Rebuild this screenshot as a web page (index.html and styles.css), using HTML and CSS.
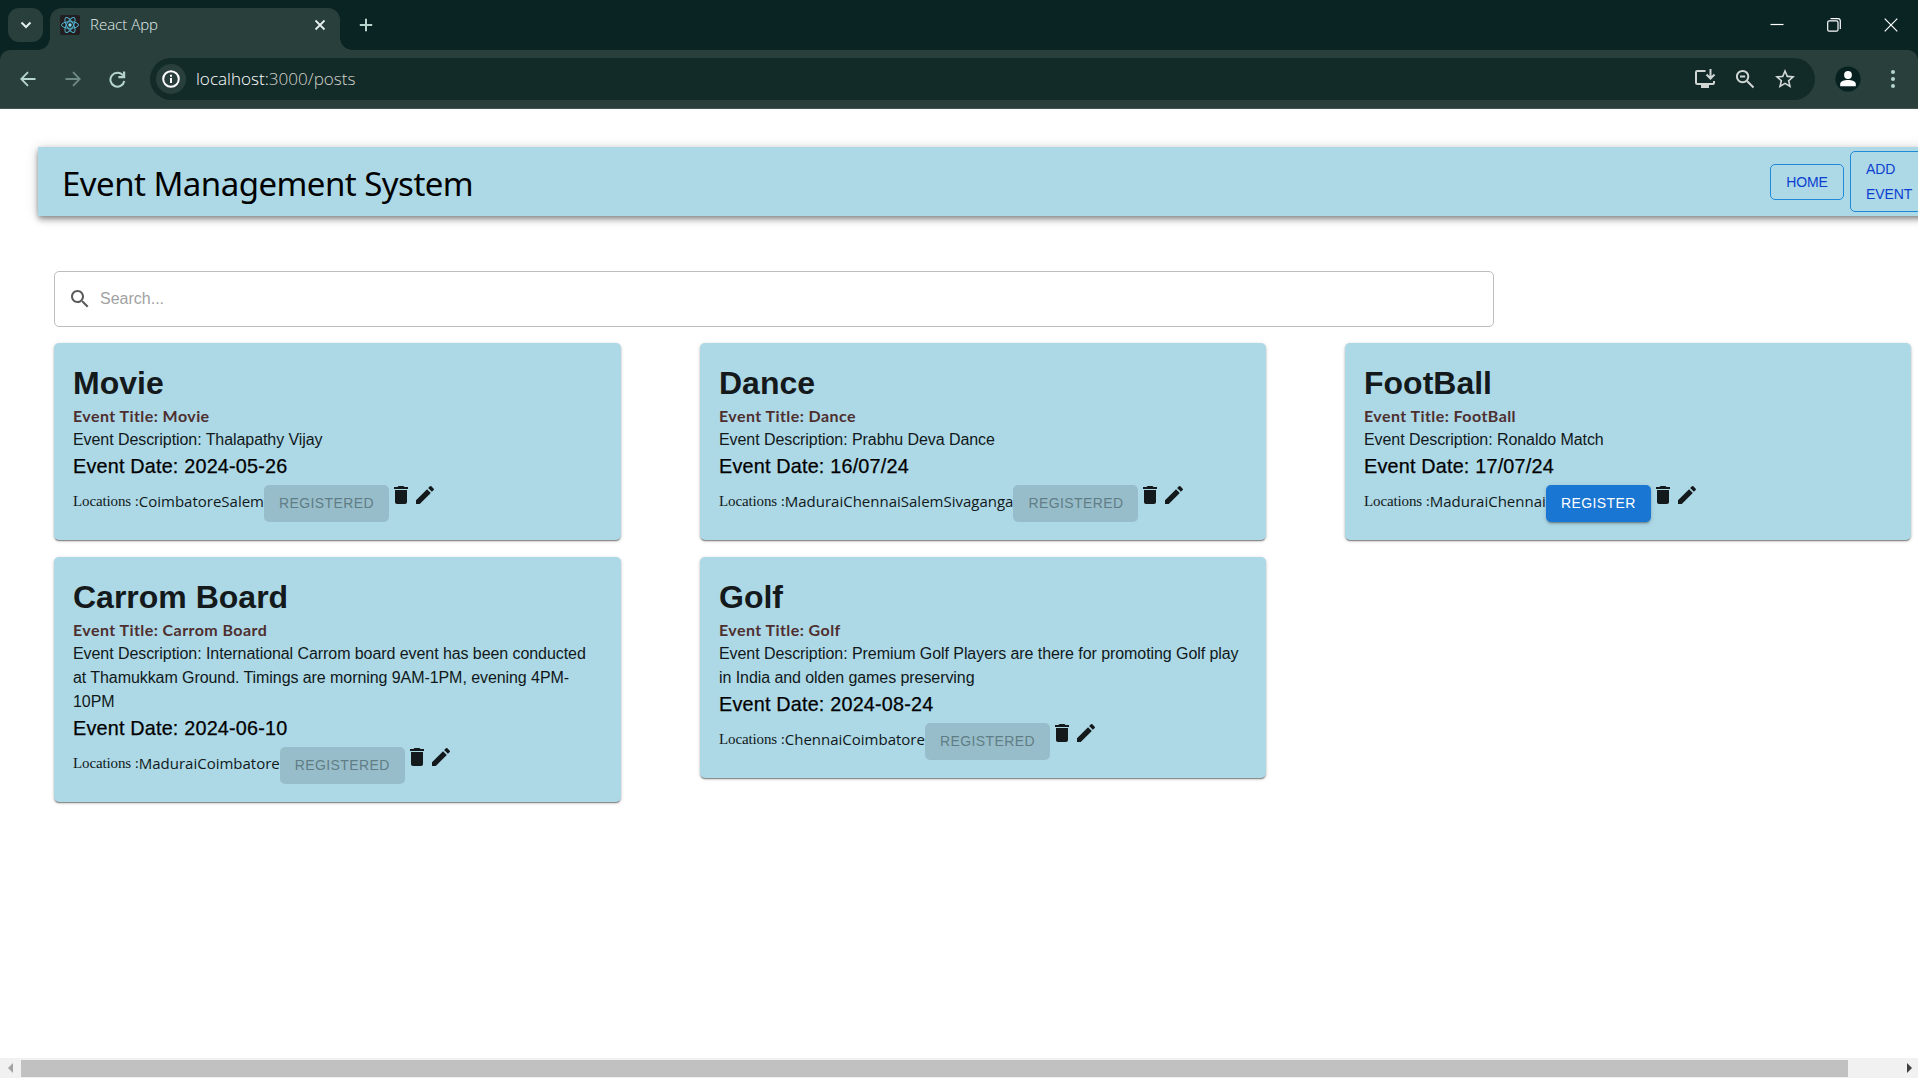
FILE: index.html
```html
<!DOCTYPE html>
<html lang="en">
<head>
<meta charset="utf-8">
<title>React App</title>
<link rel="stylesheet" href="styles.css">
</head>
<body>
<svg width="0" height="0" class="defs" aria-hidden="true">
  <symbol id="trash" viewBox="0 0 24 24"><path d="M6 19c0 1.100.9 2 2 2h8c1.100 0 2-.9 2-2V7H6zM19 4h-3.500l-1-1h-5l-1 1H5v2h14z"/></symbol>
  <symbol id="pencil" viewBox="0 0 24 24"><path d="M3 17.250V21h3.750L17.810 9.940l-3.750-3.750zM20.710 7.040c.39-.39.39-1.020 0-1.410l-2.340-2.340a.9959.9959 0 0 0-1.410 0l-1.830 1.830 3.750 3.750z"/></symbol>
</svg>

<div class="browser">
  <div class="tabstrip">
    <div class="tab-search"><svg width="12" height="8" viewBox="0 0 12 8"><path d="M1.500 1.500 6 6l4.500-4.500" class="ln bright w2"/></svg></div>
    <div class="tab">
      <svg class="favicon" width="20" height="20" viewBox="0 0 20 20"><rect width="20" height="20" rx="2" fill="#231f20"/><g fill="none" stroke="#4fb3cf" stroke-width="1"><ellipse cx="10" cy="10" rx="8.500" ry="3.300"/><ellipse cx="10" cy="10" rx="8.500" ry="3.300" transform="rotate(60 10 10)"/><ellipse cx="10" cy="10" rx="8.500" ry="3.300" transform="rotate(120 10 10)"/></g><circle cx="10" cy="10" r="1.700" fill="#7fdcf0"/></svg>
      <span class="tab-title">React App</span>
      <svg class="tab-close" width="12" height="12" viewBox="0 0 12 12"><path d="M1.500 1.500l9 9M10.500 1.500l-9 9" class="ln bright w18"/></svg>
    </div>
    <svg class="newtab" width="14" height="14" viewBox="0 0 14 14"><path d="M7 .8v12.400M.8 7h12.400" class="ln mint w2"/></svg>
    <div class="win">
      <svg width="14" height="14" viewBox="0 0 14 14"><path d="M.5 6.500h13" class="ln white"/></svg>
      <svg width="14" height="14" viewBox="0 0 14 14"><path d="M3.500.7h7.500a2.300 2.300 0 0 1 2.300 2.300v8" class="ln white"/><rect x=".7" y="2.900" width="10.300" height="10.300" rx="1.500" class="ln white"/></svg>
      <svg width="14" height="14" viewBox="0 0 14 14"><path d="M.7.7l12.600 12.600M13.300.7.700 13.300" class="ln white"/></svg>
    </div>
  </div>
  <div class="toolbar">
    <svg class="nav" width="16" height="16" viewBox="0 0 16 16"><path d="M15.500 8H1.500M8 1.200 1.300 8 8 14.800" class="ln mint w18"/></svg>
    <svg class="nav" width="16" height="16" viewBox="0 0 16 16"><path d="M.5 8h14M8 1.200 14.700 8 8 14.800" class="ln dim w18"/></svg>
    <svg class="nav" width="17" height="17" viewBox="0 0 17 17"><path d="M14 4.400A7 7 0 1 0 15.300 10" class="ln mint w2"/><path d="M16.200.5v6.800H9.400V5.100h4.600V.5z" fill="#b5d5cd"/></svg>
    <div class="omnibox">
      <div class="info"><svg width="18" height="18" viewBox="0 0 18 18"><circle cx="9" cy="9" r="7.800" class="ln white w2"/><path d="M9 8v5M9 4.700v2" class="ln white w2"/></svg></div>
      <span class="url">localhost:<span class="path">3000/posts</span></span>
      <svg class="act" width="22" height="20" viewBox="0 0 22 20"><path d="M11.500 2H3.300Q2 2 2 3.300v10.400Q2 15 3.300 15h15.400q1.300 0 1.300-1.300V12" class="ln grey w2"/><path d="M7 16h8v3H7z" fill="#cfd6d4"/><path d="M16.500 0v9M12.500 5.500l4 4 4-4" class="ln grey w2"/></svg>
      <svg class="act" width="20" height="20" viewBox="0 0 20 20"><circle cx="7.600" cy="7.600" r="5.700" class="ln grey w2"/><path d="M5 7.600h5.200M12 12l6.500 6.500" class="ln grey w2"/></svg>
      <svg class="act" width="24" height="24" viewBox="0 0 24 24"><path fill="#d3d9d7" d="m22 9.240-7.190-.62L12 2 9.190 8.630 2 9.240l5.460 4.730L5.820 21 12 17.270 18.180 21l-1.630-7.030zM12 15.400l-3.760 2.270 1-4.280-3.320-2.880 4.380-.38L12 6.100l1.710 4.040 4.380.38-3.320 2.880 1 4.280z"/></svg>
    </div>
    <svg class="avatar" width="26" height="26" viewBox="0 0 26 26"><circle cx="13" cy="13" r="12.600" fill="#06211f"/><circle cx="13" cy="9" r="3.900" fill="#fff"/><path d="M5.200 20.300v-2.200c0-2.600 4-4 7.800-4s7.800 1.400 7.800 4v2.200z" fill="#fff"/></svg>
    <svg class="dots" width="6" height="20" viewBox="0 0 6 20"><g fill="#b5d5cd"><circle cx="3" cy="3" r="2"/><circle cx="3" cy="10" r="2"/><circle cx="3" cy="17" r="2"/></g></svg>
  </div>
</div>

<div class="page">
  <header class="appbar">
    <h1 class="brand">Event Management System</h1>
    <nav class="links"><a class="btn outlined">HOME</a><a class="btn outlined tall">ADD<br>EVENT</a></nav>
  </header>
  <div class="search">
    <svg width="24" height="24" viewBox="0 0 24 24"><path fill="#5a5a5a" d="M15.500 14h-.79l-.28-.27C15.410 12.590 16 11.110 16 9.500 16 5.910 13.090 3 9.500 3S3 5.910 3 9.500 5.910 16 9.500 16c1.610 0 3.090-.59 4.230-1.570l.27.28v.79l5 4.990L20.490 19zm-6 0C7.010 14 5 11.990 5 9.500S7.010 5 9.500 5 14 7.010 14 9.500 11.990 14 9.500 14"/></svg>
    <span class="placeholder">Search...</span>
  </div>
  <main class="grid">
    <article class="card">
      <h2>Movie</h2>
      <p class="title">Event Title: Movie</p>
      <p class="desc">Event Description: Thalapathy Vijay</p>
      <p class="date">Event Date: 2024-05-26</p>
      <div class="row"><span class="label">Locations :</span><span class="loc">CoimbatoreSalem</span><span class="btn disabled">REGISTERED</span><svg class="ico"><use href="#trash"/></svg><svg class="ico"><use href="#pencil"/></svg></div>
    </article>
    <article class="card">
      <h2>Dance</h2>
      <p class="title">Event Title: Dance</p>
      <p class="desc">Event Description: Prabhu Deva Dance</p>
      <p class="date">Event Date: 16/07/24</p>
      <div class="row"><span class="label">Locations :</span><span class="loc">MaduraiChennaiSalemSivaganga</span><span class="btn disabled">REGISTERED</span><svg class="ico"><use href="#trash"/></svg><svg class="ico"><use href="#pencil"/></svg></div>
    </article>
    <article class="card">
      <h2>FootBall</h2>
      <p class="title">Event Title: FootBall</p>
      <p class="desc">Event Description: Ronaldo Match</p>
      <p class="date">Event Date: 17/07/24</p>
      <div class="row"><span class="label">Locations :</span><span class="loc">MaduraiChennai</span><span class="btn primary">REGISTER</span><svg class="ico"><use href="#trash"/></svg><svg class="ico"><use href="#pencil"/></svg></div>
    </article>
    <article class="card">
      <h2>Carrom Board</h2>
      <p class="title">Event Title: Carrom Board</p>
      <p class="desc">Event Description: International Carrom board event has been conducted<br>at Thamukkam Ground. Timings are morning 9AM-1PM, evening 4PM-<br>10PM</p>
      <p class="date">Event Date: 2024-06-10</p>
      <div class="row"><span class="label">Locations :</span><span class="loc">MaduraiCoimbatore</span><span class="btn disabled">REGISTERED</span><svg class="ico"><use href="#trash"/></svg><svg class="ico"><use href="#pencil"/></svg></div>
    </article>
    <article class="card">
      <h2>Golf</h2>
      <p class="title">Event Title: Golf</p>
      <p class="desc">Event Description: Premium Golf Players are there for promoting Golf play<br>in India and olden games preserving</p>
      <p class="date">Event Date: 2024-08-24</p>
      <div class="row"><span class="label">Locations :</span><span class="loc">ChennaiCoimbatore</span><span class="btn disabled">REGISTERED</span><svg class="ico"><use href="#trash"/></svg><svg class="ico"><use href="#pencil"/></svg></div>
    </article>
  </main>
</div>
<div class="scrollbar"><span class="arrow left"></span><span class="thumb"></span><span class="arrow right"></span></div>
</body>
</html>
```
FILE: styles.css
```css
* { box-sizing: border-box; }
body { margin: 0; width: 1918px; height: 1078px; overflow: hidden; background: #fff; font-family: "Liberation Sans", Arial, sans-serif; display: flex; flex-direction: column; }
h1, h2, p { margin: 0; }
svg { display: block; flex: none; }
.defs { position: absolute; }
.ln { fill: none; stroke-width: 1.2; }
.w18 { stroke-width: 1.8; }
.w2 { stroke-width: 2; }
.white { stroke: #fff; }
.bright { stroke: #e3efec; }
.mint { stroke: #b5d5cd; }
.dim { stroke: #6f8a85; }
.grey { stroke: #cfd6d4; }

/* browser chrome */
.browser { flex: none; height: 109px; background: #0a2323; }
.tabstrip { height: 50px; display: flex; align-items: flex-start; padding-left: 8px; }
.tab-search { width: 35px; height: 34px; margin-top: 8px; border-radius: 11px; background: #293f3c; display: flex; align-items: center; justify-content: center; }
.tab { position: relative; width: 290px; height: 42px; margin: 8px 0 0 7px; padding: 0 14px 8px 10px; border-radius: 12px 12px 0 0; background: #293f3c; display: flex; align-items: center; }
.tab::before, .tab::after { content: ""; position: absolute; bottom: 0; width: 12px; height: 12px; }
.tab::before { left: -12px; background: radial-gradient(circle at 0 0, transparent 11.5px, #293f3c 12px); }
.tab::after { right: -12px; background: radial-gradient(circle at 100% 0, transparent 11.500px, #293f3c 12px); }
.tab-title { margin: -2px 0 0 10px; font: 300 15px/20px "Open Sans", sans-serif; color: #e3efec; flex: 1; }
.newtab { margin: 18px 0 0 19px; }
.win { margin: 18px 20px 0 auto; display: flex; gap: 43px; }
.toolbar { height: 59px; background: #293f3c; border-bottom: 1px solid #405552; border-radius: 10px 10px 0 0; display: flex; align-items: center; padding: 0 22px 0 20px; }
.nav { margin-right: 28.500px; }
.nav + .nav + .nav { margin-right: 24px; }
.omnibox { flex: 1; height: 42px; border-radius: 21px; background: #122a28; display: flex; align-items: center; padding: 0 18px 0 6px; }
.info { width: 30px; height: 30px; border-radius: 50%; background: #293f3c; display: flex; align-items: center; justify-content: center; }
.url { margin-left: 10px; flex: 1; font: 300 17.100px/24px "Open Sans", sans-serif; color: #fff; }
.path { color: #d5d2cc; }
.act { margin-left: 19px; }
.act:last-child { margin-left: 18px; }
.avatar { margin-left: 20px; }
.dots { margin-left: 29px; }

/* page */
.page { flex: 1; min-height: 0; overflow: hidden; padding: 38px 0 0 38px; }
.appbar { width: 1920px; height: 69px; background: #add8e6; box-shadow: 0 2px 5px -1px rgba(0,0,0,.3), 0 4px 6px rgba(0,0,0,.22), 0 1px 12px rgba(0,0,0,.16); display: flex; align-items: center; padding-left: 24px; }
.brand { width: 1708px; font: 400 33px/44px "Noto Sans", sans-serif; letter-spacing: -.53px; color: #000; padding-top: 5px; white-space: nowrap; }
.links { display: flex; align-items: center; gap: 6px; }
.btn { flex: none; height: 37px; border-radius: 5px; font-size: 14px; line-height: 37px; letter-spacing: .4px; text-align: center; white-space: nowrap; }
.outlined { width: 74px; height: 36px; line-height: 34px; letter-spacing: -.1px; border: 1px solid #1f8ad8; color: #0b3fd0; }
.tall { width: 92px; height: 61px; line-height: 25px; padding: 5px 0 0 15px; text-align: left; }
.search { width: 1440px; height: 56px; margin: 55px 0 16px 16px; border: 1px solid #bdbdbd; border-radius: 5px; display: flex; align-items: center; padding-left: 13px; }
.placeholder { margin-left: 8px; font-size: 16px; color: #a2a2a2; }
.grid { margin-left: 16px; display: grid; grid-template-columns: 567px 566px 566px; column-gap: 79px; row-gap: 16.200px; align-items: start; }
.card { background: #add8e6; border-radius: 5px; padding: 19px 19px 18px; box-shadow: 0 2px 1px -1px rgba(0,0,0,.3), 0 1px 2px rgba(0,0,0,.24), 0 1px 4px rgba(0,0,0,.12); }
h2 { font-size: 32px; line-height: 42px; font-weight: 700; color: #14191b; }
.title { font: 700 16px/24px "Lato", sans-serif; letter-spacing: .43px; color: #4e2f2f; }
.desc { font-size: 16px; line-height: 24px; letter-spacing: -.07px; color: #10181a; white-space: nowrap; }
.date { font-size: 19.800px; line-height: 29.400px; letter-spacing: .2px; -webkit-text-stroke: .25px #000; color: #000; }
.row { display: flex; align-items: flex-start; height: 41px; white-space: nowrap; line-height: 41px; color: #10181a; }
.label { font-family: "Liberation Serif", serif; font-size: 15px; letter-spacing: -.12px; }
.loc { font-family: "Open Sans", sans-serif; font-size: 15px; }
.row .btn { margin-top: 4px; }
.disabled { width: 125px; background: rgba(0,0,0,.12); color: #607d86; }
.primary { width: 105px; background: #1976d2; color: #fff; box-shadow: 0 3px 1px -2px rgba(0,0,0,.2), 0 2px 2px rgba(0,0,0,.14), 0 1px 5px rgba(0,0,0,.12); }
.ico { width: 24px; height: 24px; margin-top: 2px; fill: #14191b; }

/* scrollbar */
.scrollbar { flex: none; height: 20px; background: #f1f1f1; display: flex; align-items: center; }
.arrow { width: 0; height: 0; border: 5px solid transparent; }
.left { border-left: 0; border-right-color: #a3a3a3; margin: 0 8px; }
.right { border-right: 0; border-left-color: #404040; margin-left: 59px; }
.thumb { width: 1827px; height: 17px; background: #c1c1c1; }
```
